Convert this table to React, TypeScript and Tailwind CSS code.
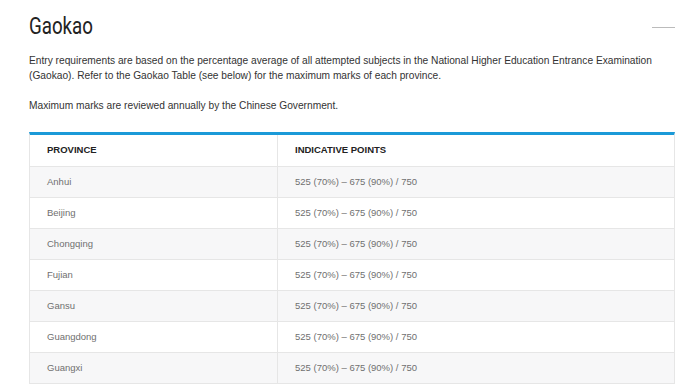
const rows = ["Anhui", "Beijing", "Chongqing", "Fujian", "Gansu", "Guangdong", "Guangxi"];

export default function App() {
  return (
    <div className="w-[681px] h-[385px] overflow-hidden bg-white pl-[29px] pt-[11px] [font-family:'Liberation_Sans',Arial,sans-serif] text-[#333]">
      <div className="flex items-center justify-between w-[646px]">
        <h2 className="origin-left scale-x-[0.78] text-[24px] leading-[30px] text-[#222] [font-family:Roboto,sans-serif]">Gaokao</h2>
        <div className="mt-[2px] h-px w-[23px] bg-[#bbb]" />
      </div>
      <p className="mt-[12px] w-[640px] text-[10.2px] leading-[15px]">
        Entry requirements are based on the percentage average of all attempted subjects in the National Higher Education Entrance Examination (Gaokao). Refer to the Gaokao Table (see below) for the maximum marks of each province.
      </p>
      <p className="mt-[15px] text-[10.2px] leading-[15px]">Maximum marks are reviewed annually by the Chinese Government.</p>
      <div className="mt-[19px] w-[646px] border-t-[3px] border-[#1b9ad8] border-x border-x-[#e6e6e6]">
        <div className="flex h-[32px] items-center border-b border-[#e6e6e6] text-[9.5px] font-bold text-[#222]">
          <div className="w-[248px] h-full flex items-center pl-[17px] border-r border-[#e6e6e6]">PROVINCE</div>
          <div className="pl-[17px]">INDICATIVE POINTS</div>
        </div>
        {rows.map((r, i) => (
          <div key={r} className={`flex h-[31px] items-center border-b border-[#e6e6e6] text-[9.5px] text-[#707070] ${i % 2 === 0 ? "bg-[#f7f7f8]" : "bg-white"}`}>
            <div className="w-[248px] h-full flex items-center pl-[17px] border-r border-[#e6e6e6]">{r}</div>
            <div className="pl-[17px]">525 (70%) – 675 (90%) / 750</div>
          </div>
        ))}
      </div>
    </div>
  );
}
